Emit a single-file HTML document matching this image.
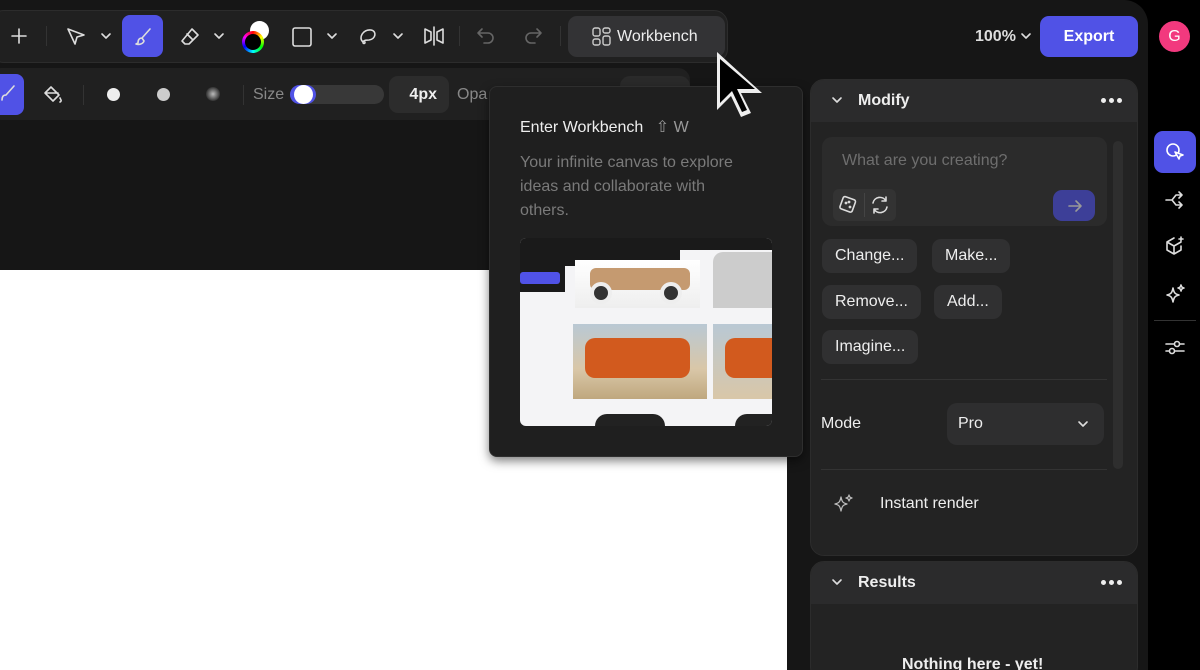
<!DOCTYPE html>
<html style="overflow:hidden"><head><style>
*{margin:0;padding:0;box-sizing:border-box}
html,body{width:1200px;height:670px;overflow:hidden}
body{background:#000;font-family:"Liberation Sans",sans-serif;color:#eee;position:relative}
.abs{position:absolute}
svg{position:absolute;fill:none;stroke:#ddd;stroke-width:1.6;stroke-linecap:round;stroke-linejoin:round}
.chip{position:absolute;height:34px;background:#303031;border-radius:9px;font-size:16px;color:#eee;line-height:34px;padding:0 13px}
.dots{position:absolute;width:22px;height:6px}
.dots i{position:absolute;top:0;width:5px;height:5px;border-radius:50%;background:#eee}
</style></head><body>
<div class="abs" style="left:0;top:0;width:1148px;height:670px;background:#161616;border-top-right-radius:24px"></div>
<div class="abs" style="left:0;top:270px;width:787px;height:400px;background:#fff"></div>
<!-- top toolbar -->
<div class="abs" style="left:-10px;top:10px;width:738px;height:53px;background:#202020;border:1px solid #2c2c2c;border-radius:14px"></div>
<svg style="left:9px;top:26px" width="20" height="20"><path d="M10 3v14M3 10h14"/></svg>
<div class="abs" style="left:46px;top:26px;width:1px;height:20px;background:#333"></div>
<svg style="left:64px;top:25px" width="24" height="24"><path d="M4 4l16 6-7 2-2 7z"/></svg>
<svg style="left:100px;top:31px" width="12" height="10"><path d="M2 3l4 4 4-4"/></svg>
<div class="abs" style="left:122px;top:15px;width:41px;height:42px;background:#5052e6;border-radius:8px"></div>
<svg style="left:132px;top:26px" width="22" height="22"><path d="M18 3l-8 9M10 12c-3 0-4 2-4 5l-2 1c3 1 7 0 8-3z"/></svg>
<svg style="left:178px;top:25px" width="24" height="24"><path d="M14 4l6 6-9 9H7l-3-3zM9 9l6 6"/></svg>
<svg style="left:213px;top:31px" width="12" height="10"><path d="M2 3l4 4 4-4"/></svg>
<div class="abs" style="left:250px;top:21px;width:19px;height:19px;background:#fff;border-radius:50%"></div>
<div class="abs" style="left:242px;top:31px;width:22px;height:22px;border-radius:50%;background:conic-gradient(red,yellow,lime,cyan,blue,magenta,red)"></div>
<div class="abs" style="left:245px;top:34px;width:16px;height:16px;border-radius:50%;background:#000"></div>
<svg style="left:290px;top:25px" width="24" height="24"><rect x="3" y="3" width="18" height="18" rx="2"/></svg>
<svg style="left:326px;top:31px" width="12" height="10"><path d="M2 3l4 4 4-4"/></svg>
<svg style="left:356px;top:24px" width="24" height="24"><path d="M7 18c-5-4 0-13 8-12 6 1 5 9-2 10-3 0-5 0-6 2 0 2 2 2 2 0"/></svg>
<svg style="left:392px;top:31px" width="12" height="10"><path d="M2 3l4 4 4-4"/></svg>
<svg style="left:422px;top:24px" width="24" height="24"><path d="M3 5l6 3v8l-6 3zM21 5l-6 3v8l6 3zM12 3v18"/></svg>
<div class="abs" style="left:459px;top:26px;width:1px;height:20px;background:#333"></div>
<svg style="left:475px;top:26px;stroke:#666" width="22" height="20"><path d="M7 3L3 7l4 4M3 7h10a5 5 0 010 10H9"/></svg>
<svg style="left:522px;top:26px;stroke:#666" width="22" height="20"><path d="M15 3l4 4-4 4M19 7H9a5 5 0 000 10h4"/></svg>
<div class="abs" style="left:560px;top:26px;width:1px;height:20px;background:#333"></div>
<div class="abs" style="left:568px;top:16px;width:157px;height:41px;background:#333335;border-radius:9px"></div>
<svg style="left:591px;top:26px;stroke:#ccc;stroke-width:1.4" width="22" height="22"><rect x="2" y="2" width="7" height="8" rx="2"/><rect x="12" y="2" width="7" height="5" rx="2"/><rect x="2" y="13" width="7" height="6" rx="2"/><rect x="12" y="10" width="7" height="9" rx="2"/></svg>
<div class="abs" style="left:617px;top:28px;font-size:16px;color:#eee">Workbench</div>
<!-- right top -->
<div class="abs" style="left:975px;top:28px;font-size:16px;font-weight:bold;color:#ddd">100%</div>
<svg style="left:1020px;top:31px" width="12" height="10"><path d="M2 3l4 4 4-4"/></svg>
<div class="abs" style="left:1040px;top:16px;width:98px;height:41px;background:#5052e6;border-radius:9px;font-size:16px;font-weight:bold;text-align:center;line-height:41px;color:#fff">Export</div>
<div class="abs" style="left:1159px;top:21px;width:31px;height:31px;background:#f2397e;border-radius:50%;font-size:16px;text-align:center;line-height:31px;color:#fff">G</div>
<!-- second toolbar -->
<div class="abs" style="left:-10px;top:68px;width:700px;height:52px;background:#202020;border-radius:12px"></div>
<div class="abs" style="left:-10px;top:74px;width:34px;height:41px;background:#5052e6;border-radius:8px"></div>
<svg style="left:0;top:84px" width="16" height="20"><path d="M14 2L6 11M6 11c-3 0-4 2-4 5"/></svg>
<svg style="left:42px;top:84px" width="22" height="22"><path d="M9 3l8 8-6 6-8-8zM3 9h13M18 14c1 2 2 3 0 4"/></svg>
<div class="abs" style="left:83px;top:85px;width:1px;height:20px;background:#333"></div>
<div class="abs" style="left:107px;top:88px;width:13px;height:13px;background:#eee;border-radius:50%"></div>
<div class="abs" style="left:157px;top:88px;width:13px;height:13px;background:#ccc;border-radius:50%"></div>
<div class="abs" style="left:206px;top:87px;width:14px;height:14px;background:radial-gradient(#bbb,#333 70%);border-radius:50%"></div>
<div class="abs" style="left:243px;top:85px;width:1px;height:20px;background:#333"></div>
<div class="abs" style="left:253px;top:86px;font-size:16px;color:#888">Size</div>
<div class="abs" style="left:290px;top:85px;width:94px;height:19px;background:#383838;border-radius:10px"></div>
<div class="abs" style="left:290px;top:85px;width:26px;height:19px;background:#5052e6;border-radius:10px"></div>
<div class="abs" style="left:294px;top:85px;width:19px;height:19px;background:#fff;border-radius:50%"></div>
<div class="abs" style="left:389px;top:76px;width:60px;height:37px;background:#2c2c2c;border-radius:9px;font-size:16px;font-weight:bold;text-align:right;padding-right:12px;line-height:37px">4px</div>
<div class="abs" style="left:457px;top:86px;font-size:16px;color:#888">Opa</div>
<div class="abs" style="left:620px;top:76px;width:70px;height:20px;background:#2a2a2a;border-radius:10px 10px 0 0"></div>
<!-- tooltip -->
<div class="abs" style="left:489px;top:86px;width:314px;height:371px;background:#1f1f1f;border:1px solid #2e2e2e;border-radius:8px;box-shadow:0 4px 10px rgba(0,0,0,.5)"></div>
<div class="abs" style="left:520px;top:117px;font-size:16px;color:#eee">Enter Workbench <span style="color:#999;margin-left:8px">⇧ W</span></div>
<div class="abs" style="left:520px;top:151px;width:218px;font-size:16px;line-height:24px;color:#7a7a7a">Your infinite canvas to explore ideas and collaborate with others.</div>
<div class="abs" style="left:520px;top:238px;width:252px;height:188px;background:#f4f4f6;border-radius:6px;overflow:hidden">
 <div class="abs" style="left:0;top:0;width:252px;height:12px;background:#1a1a1a"></div>
 <div class="abs" style="left:0;top:12px;width:160px;height:16px;background:#1a1a1a;border-radius:0 0 6px 0"></div>
 <div class="abs" style="left:0;top:12px;width:45px;height:42px;background:#1a1a1a"></div>
 <div class="abs" style="left:0;top:34px;width:40px;height:12px;background:#5052e6;border-radius:3px"></div>
 <div class="abs" style="left:55px;top:22px;width:125px;height:48px;background:linear-gradient(#fff,#eee)"></div>
 <div class="abs" style="left:70px;top:30px;width:100px;height:22px;background:#c59a70;border-radius:6px"></div>
 <div class="abs" style="left:70px;top:44px;width:22px;height:22px;background:#333;border:4px solid #eee;border-radius:50%"></div>
 <div class="abs" style="left:140px;top:44px;width:22px;height:22px;background:#333;border:4px solid #eee;border-radius:50%"></div>
 <div class="abs" style="left:193px;top:14px;width:59px;height:56px;background:#ccc;border-radius:10px 0 0 0"></div>
 <div class="abs" style="left:53px;top:86px;width:134px;height:75px;background:linear-gradient(#b9c8d4,#d9c7a8 60%,#bfa77e)"></div>
 <div class="abs" style="left:65px;top:100px;width:105px;height:40px;background:#d25a1e;border-radius:10px"></div>
 <div class="abs" style="left:193px;top:86px;width:59px;height:75px;background:linear-gradient(#b9c8d4,#d9c7a8)"></div>
 <div class="abs" style="left:205px;top:100px;width:47px;height:40px;background:#d25a1e;border-radius:10px 0 0 10px"></div>
 <div class="abs" style="left:75px;top:176px;width:70px;height:16px;background:#222;border-radius:12px 12px 0 0"></div>
 <div class="abs" style="left:215px;top:176px;width:37px;height:16px;background:#222;border-radius:12px 0 0 0"></div>
</div>
<!-- cursor -->
<div class="abs" style="left:712px;top:47px;width:56px;height:76px;background:#eee;clip-path:polygon(5px 5px,5px 63px,19px 49px,29px 70px,39px 66px,29px 46px,50px 46px)"></div>
<div class="abs" style="left:712px;top:47px;width:56px;height:76px;background:#000;clip-path:polygon(8px 12px,8px 56px,20px 44px,30px 65px,35px 63px,25px 42px,43px 42px)"></div>
<!-- modify panel -->
<div class="abs" style="left:810px;top:79px;width:328px;height:477px;background:#232323;border:1px solid #2c2c2c;border-radius:14px;overflow:hidden">
 <div style="height:42px;background:#2b2b2c"></div>
</div>
<svg style="left:831px;top:95px" width="12" height="10"><path d="M2 3l4 4 4-4"/></svg>
<div class="abs" style="left:858px;top:92px;font-size:16px;font-weight:bold;color:#eee">Modify</div>
<div class="dots" style="left:1101px;top:98px"><i style="left:0"></i><i style="left:8px"></i><i style="left:16px"></i></div>
<div class="abs" style="left:822px;top:137px;width:285px;height:89px;background:#2b2b2b;border-radius:10px"></div>
<div class="abs" style="left:842px;top:152px;font-size:16px;color:#6e6e6e">What are you creating?</div>
<div class="abs" style="left:833px;top:189px;width:63px;height:32px;background:#333;border-radius:6px"></div>
<div class="abs" style="left:864px;top:193px;width:1px;height:24px;background:#444"></div>
<svg style="left:837px;top:194px" width="22" height="22"><rect x="4" y="4" width="13" height="13" rx="2" transform="rotate(20 11 11)"/><circle cx="9" cy="9" r=".6"/><circle cx="13" cy="13" r=".6"/><circle cx="12" cy="8" r=".6"/></svg>
<svg style="left:869px;top:194px" width="22" height="22"><path d="M4 9a7 7 0 0113-2M18 13a7 7 0 01-13 2M17 3v4h-4M5 19v-4h4"/></svg>
<div class="abs" style="left:1053px;top:190px;width:42px;height:31px;background:#3d3f98;border-radius:9px"></div>
<svg style="left:1066px;top:197px;stroke:#999" width="18" height="18"><path d="M3 9h12M10 4l5 5-5 5"/></svg>
<div class="chip" style="left:822px;top:239px">Change...</div>
<div class="chip" style="left:932px;top:239px">Make...</div>
<div class="chip" style="left:822px;top:285px">Remove...</div>
<div class="chip" style="left:934px;top:285px">Add...</div>
<div class="chip" style="left:822px;top:330px">Imagine...</div>
<div class="abs" style="left:1113px;top:141px;width:10px;height:328px;background:#2e2e2e;border-radius:5px"></div>
<div class="abs" style="left:821px;top:379px;width:286px;height:1px;background:#333"></div>
<div class="abs" style="left:821px;top:415px;font-size:16px">Mode</div>
<div class="abs" style="left:947px;top:403px;width:157px;height:42px;background:#2e2e2f;border-radius:10px"></div>
<div class="abs" style="left:958px;top:415px;font-size:16px">Pro</div>
<svg style="left:1077px;top:419px" width="12" height="10"><path d="M2 3l4 4 4-4"/></svg>
<div class="abs" style="left:821px;top:469px;width:286px;height:1px;background:#333"></div>
<svg style="left:832px;top:492px;stroke:#bbb;stroke-width:1.3" width="24" height="24"><path d="M9 5c1 5 2 6 6 7-4 1-5 2-6 7-1-5-2-6-6-7 4-1 5-2 6-7zM17 3c.5 2 1 2.5 3 3-2 .5-2.5 1-3 3-.5-2-1-2.5-3-3 2-.5 2.5-1 3-3z"/></svg>
<div class="abs" style="left:880px;top:495px;font-size:16px">Instant render</div>
<!-- results -->
<div class="abs" style="left:810px;top:561px;width:328px;height:120px;background:#232323;border:1px solid #2c2c2c;border-radius:14px;overflow:hidden"><div style="height:42px;background:#2b2b2c"></div></div>
<svg style="left:831px;top:577px" width="12" height="10"><path d="M2 3l4 4 4-4"/></svg>
<div class="abs" style="left:858px;top:574px;font-size:16px;font-weight:bold">Results</div>
<div class="dots" style="left:1101px;top:580px"><i style="left:0"></i><i style="left:8px"></i><i style="left:16px"></i></div>
<div class="abs" style="left:902px;top:656px;font-size:16px;font-weight:bold">Nothing here - yet!</div>
<!-- right rail -->
<div class="abs" style="left:1154px;top:131px;width:42px;height:42px;background:#5052e6;border-radius:9px"></div>
<svg style="left:1164px;top:141px;stroke:#fff" width="22" height="22"><circle cx="9" cy="9" r="6"/><path d="M11 11l8 3-3 1-1 3z" fill="#5052e6"/></svg>
<svg style="left:1164px;top:189px" width="22" height="22"><path d="M2 11h6l4-5h6M8 11l4 5h6M15 3l3 3-3 3M15 13l3 3-3 3"/></svg>
<svg style="left:1164px;top:235px" width="22" height="22"><path d="M10 3l-7 4v8l7 4 7-4v-4M3 7l7 4 7-4M10 11v8M17 2v4M15 4h4"/></svg>
<svg style="left:1164px;top:283px" width="22" height="22"><path d="M9 5c1 5 2 6 6 7-4 1-5 2-6 7-1-5-2-6-6-7 4-1 5-2 6-7zM17 2c.5 2 1 2.5 3 3-2 .5-2.5 1-3 3-.5-2-1-2.5-3-3 2-.5 2.5-1 3-3z"/></svg>
<div class="abs" style="left:1154px;top:320px;width:42px;height:1px;background:#333"></div>
<svg style="left:1164px;top:336px" width="22" height="22"><path d="M2 8h18M2 15h18"/><circle cx="13" cy="8" r="2.5" fill="#000"/><circle cx="8" cy="15" r="2.5" fill="#000"/></svg>
</body></html>
